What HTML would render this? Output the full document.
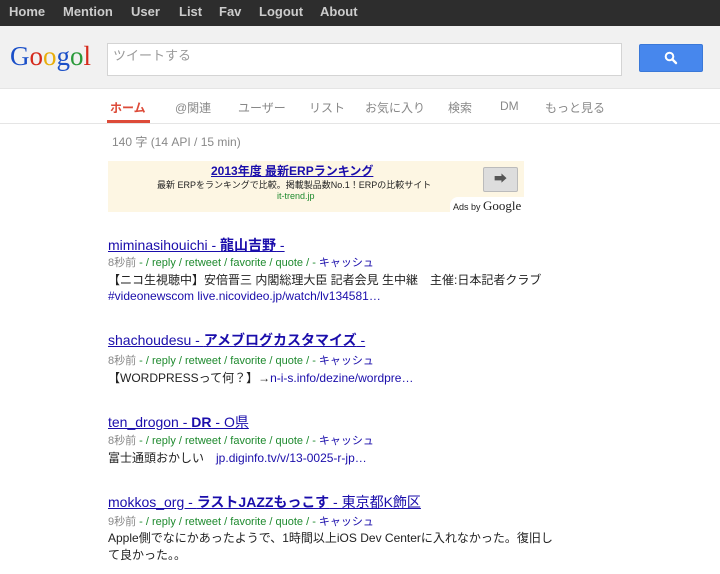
<!DOCTYPE html>
<html><head><meta charset="utf-8"><style>
body{margin:0;width:720px;height:574px;overflow:hidden;font-family:"Liberation Sans","Noto Sans CJK JP",sans-serif;background:#fff;position:relative}
.a{position:absolute;white-space:nowrap}
#top{position:absolute;left:0;top:0;width:720px;height:26px;background:#2d2d2d}
#top span{position:absolute;top:4px;color:#ccc;font-weight:bold;font-size:13px}
#hdr{position:absolute;top:26px;left:0;width:720px;height:62px;background:#f1f1f1;border-bottom:1px solid #e5e5e5}
.tab{position:absolute;top:99px;font-size:12px;color:#888}
.n{font-size:14px;color:#1a0dab;text-decoration:underline}
.n b{color:#1a0dab}
.m{font-size:11px;color:#1e8a2e}
.m .g{color:#888}.m .c{color:#1a0dab}
.t{font-size:12px;color:#222}
.l{color:#1a0dab}
</style></head><body>
<div id="top"><span style="left:9px">Home</span><span style="left:63px">Mention</span><span style="left:131px">User</span><span style="left:179px">List</span><span style="left:219px">Fav</span><span style="left:259px">Logout</span><span style="left:320px">About</span></div>
<div id="hdr"></div>
<div class="a" style="left:10px;top:41px;font-family:'Liberation Serif',serif;font-size:27px"><span style="color:#1a4fc8">G</span><span style="color:#d52a1c">o</span><span style="color:#e8ae0c">o</span><span style="color:#1a4fc8">g</span><span style="color:#2a9a3a">o</span><span style="color:#d52a1c">l</span></div>
<div class="a" style="left:107px;top:43px;width:513px;height:31px;background:#fff;border:1px solid #d4d4d4"></div>
<div class="a" style="left:113px;top:45px;font-size:13px;color:#999">ツイートする</div>
<div class="a" style="left:639px;top:44px;width:64px;height:28px;background:#4787ed;border-radius:2px;border:1px solid #3a78d8;box-sizing:border-box"></div>
<svg class="a" style="left:664px;top:51px" width="14" height="14" viewBox="0 0 14 14"><circle cx="5.5" cy="5.5" r="3.8" fill="none" stroke="#fff" stroke-width="2"/><path d="M8.3 8.3L12 12" stroke="#fff" stroke-width="2.4" stroke-linecap="round"/></svg>
<div class="tab" style="left:110px;color:#dd4b39;font-weight:bold">ホーム</div>
<div class="a" style="left:107px;top:120px;width:43px;height:3px;background:#dd4b39"></div>
<div class="tab" style="left:175px">@関連</div>
<div class="tab" style="left:238px">ユーザー</div>
<div class="tab" style="left:309px">リスト</div>
<div class="tab" style="left:365px">お気に入り</div>
<div class="tab" style="left:448px">検索</div>
<div class="tab" style="left:500px">DM</div>
<div class="tab" style="left:545px">もっと見る</div>
<div class="a" style="left:0;top:123px;width:720px;height:1px;background:#e5e5e5"></div>
<div class="a" style="left:112px;top:133px;font-size:12px;color:#888">140 字 (14 API / 15 min)</div>
<div class="a" style="left:108px;top:161px;width:416px;height:51px;background:#fdf6e3"></div>
<div class="a" style="left:211px;top:162px;font-size:12px;font-weight:bold;color:#1a0dab;text-decoration:underline">2013年度 最新ERPランキング</div>
<div class="a" style="left:157px;top:178px;font-size:9px;color:#222">最新 ERPをランキングで比較。掲載製品数No.1！ERPの比較サイト</div>
<div class="a" style="left:277px;top:191px;font-size:9px;color:#1e8a2e">it-trend.jp</div>
<div class="a" style="left:483px;top:167px;width:35px;height:25px;background:#ddd;border:1px solid #bbb;border-radius:2px;box-sizing:border-box;font-size:13px;color:#555;text-align:center;line-height:22px">➡</div>
<div class="a" style="left:450px;top:197px;width:74px;height:16px;background:#fff;border-radius:8px 0 0 0"></div>
<div class="a" style="left:453px;top:198px;font-size:9px;color:#222">Ads by <span style="font-family:'Liberation Serif',serif;font-size:13px">Google</span></div>

<div class="a n" style="left:108px;top:235px">miminasihouichi - <b>龍山吉野</b> -</div>
<div class="a m" style="left:108px;top:254px"><span class="g">8秒前</span> - / reply / retweet / favorite / quote / - <span class="c">キャッシュ</span></div>
<div class="a t" style="left:108px;top:271px">【ニコ生視聴中】安倍晋三 内閣総理大臣 記者会見 生中継　主催:日本記者クラブ</div>
<div class="a t l" style="left:108px;top:289px">#videonewscom live.nicovideo.jp/watch/lv134581…</div>

<div class="a n" style="left:108px;top:330px">shachoudesu - <b>アメブログカスタマイズ</b> -</div>
<div class="a m" style="left:108px;top:352px"><span class="g">8秒前</span> - / reply / retweet / favorite / quote / - <span class="c">キャッシュ</span></div>
<div class="a t" style="left:108px;top:369px">【WORDPRESSって何？】→<span class="l">n-i-s.info/dezine/wordpre…</span></div>

<div class="a n" style="left:108px;top:412px">ten_drogon - <b>DR</b> - O県</div>
<div class="a m" style="left:108px;top:432px"><span class="g">8秒前</span> - / reply / retweet / favorite / quote / - <span class="c">キャッシュ</span></div>
<div class="a t" style="left:108px;top:449px">富士通頭おかしい　<span class="l">jp.diginfo.tv/v/13-0025-r-jp…</span></div>

<div class="a n" style="left:108px;top:492px">mokkos_org - <b>ラストJAZZもっこす</b> - 東京都K飾区</div>
<div class="a m" style="left:108px;top:513px"><span class="g">9秒前</span> - / reply / retweet / favorite / quote / - <span class="c">キャッシュ</span></div>
<div class="a t" style="left:108px;top:529px">Apple側でなにかあったようで、1時間以上iOS Dev Centerに入れなかった。復旧し</div>
<div class="a t" style="left:108px;top:546px">て良かった。。</div>
</body></html>
